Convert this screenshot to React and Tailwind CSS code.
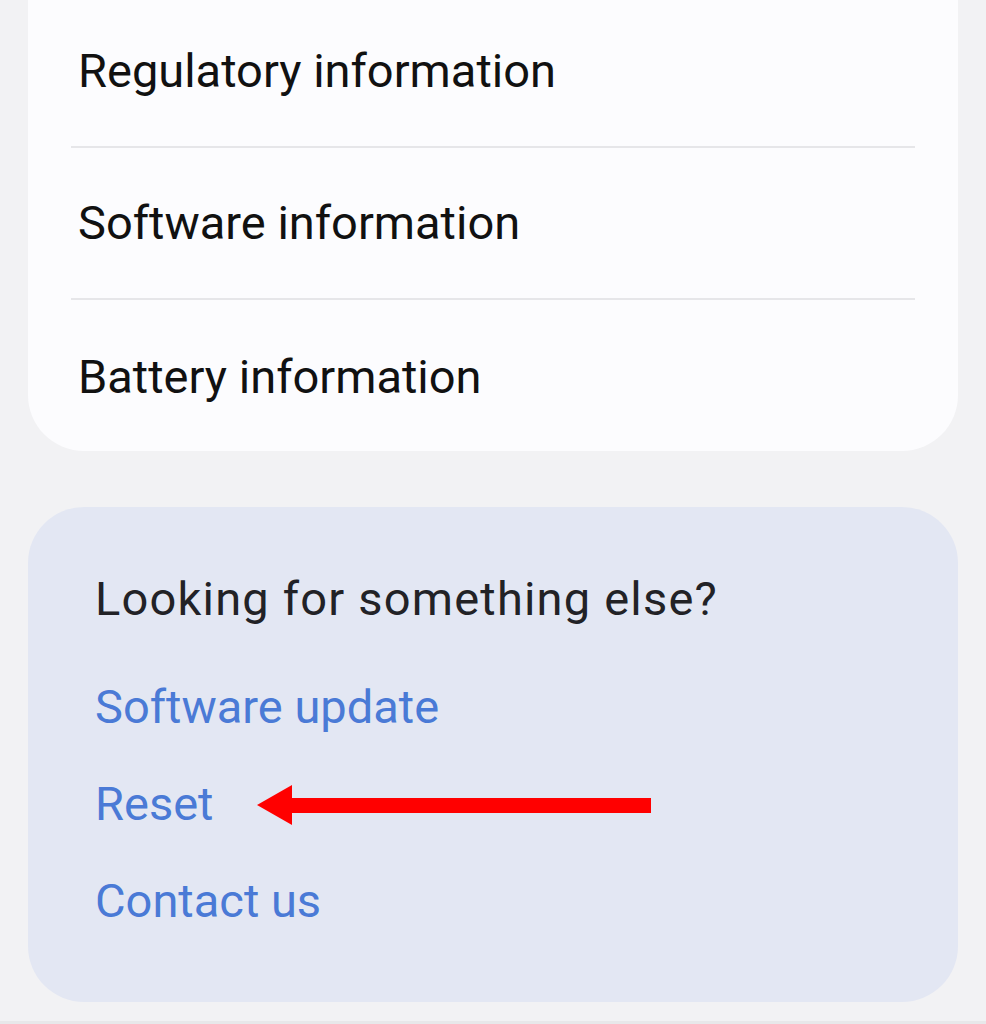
import React from "react";

const rows = ["Regulatory information", "Software information", "Battery information"];
const links = ["Software update", "Reset", "Contact us"];

const Arrow = () => (
  <svg width="396" height="42" viewBox="0 0 396 42" className="ml-[44px] mt-[2px]">
    <polygon points="0,20 35,0 35,13 394,13 394,28 35,28 35,40" fill="#ff0000" />
  </svg>
);

export default function App() {
  return (
    <div
      className="w-[986px] h-[1024px] overflow-hidden bg-[#f2f2f4] px-[28px] flex flex-col"
      style={{ fontFamily: "Roboto, 'Noto Sans', sans-serif" }}
    >
      {/* info card */}
      <div className="bg-[#fcfcfe] rounded-b-[56px] flex flex-col">
        {rows.map((r, i) => (
          <div key={r} className="flex flex-col">
            <div
              className={
                "flex items-center px-[50px] text-[47px] text-[#111111] " +
                (i === 0 ? "h-[146px] pb-[4px]" : i === 1 ? "h-[150px]" : "h-[151px] pt-[4px]")
              }
            >
              {r}
            </div>
            {i < rows.length - 1 && <div className="mx-[43px] h-[2px] bg-[#e6e6e9]" />}
          </div>
        ))}
      </div>

      {/* looking for something else */}
      <div className="mt-[56px] h-[495px] bg-[#e3e7f3] rounded-[56px] px-[67px] pt-[62px] flex flex-col">
        <div className="text-[47px] tracking-[1.2px] text-[#222226] leading-[60px]">Looking for something else?</div>
        <div className="mt-[30px] flex flex-col">
          {links.map((l) => (
            <div key={l} className="h-[97px] flex items-center text-[47px] text-[#4a7ad6]">
              <span>{l}</span>
              {l === "Reset" && <Arrow />}
            </div>
          ))}
        </div>
      </div>
      <div className="mt-[19px] -mx-[28px] h-[3px] bg-[#e8e8ea]" />
    </div>
  );
}
